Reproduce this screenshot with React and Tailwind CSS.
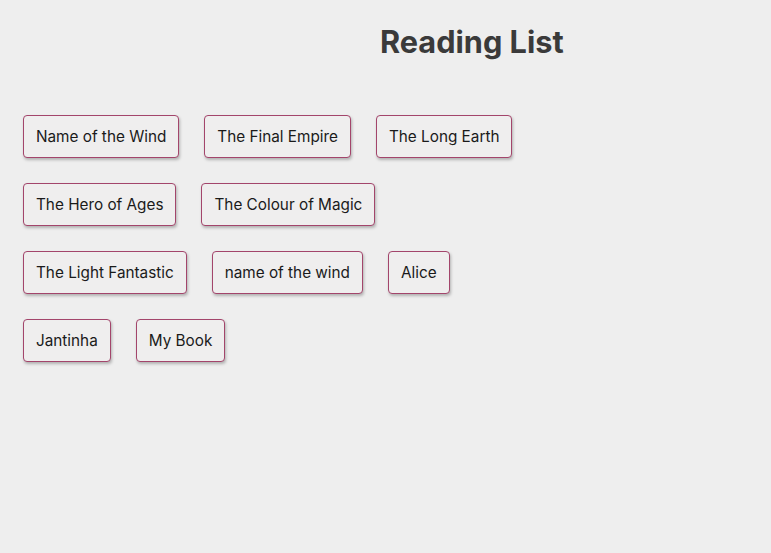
import React from 'react';

const books = [
  'Name of the Wind',
  'The Final Empire',
  'The Long Earth',
  'The Hero of Ages',
  'The Colour of Magic',
  'The Light Fantastic',
  'name of the wind',
  'Alice',
  'Jantinha',
  'My Book',
];

const App = () => {
  return (
    <div className="min-h-screen w-full bg-[#eeeeee] font-['Inter',sans-serif] text-[#1a1a1a]">
      <h1 className="pl-[380px] pt-[22px] text-[30.7px] font-bold leading-[40px] text-[#3a3a3a]">
        Reading List
      </h1>

      <div className="mt-[53px] ml-[23px] flex w-[520px] flex-wrap gap-[25px]">
        {books.map((book, i) => (
          <button
            key={i}
            className="h-[43px] rounded-[4px] border border-[#a3456b] bg-[#efeeee] px-[12px] pt-[2px] text-[15.3px] shadow-[1px_2px_3px_rgba(0,0,0,0.25)]"
          >
            {book}
          </button>
        ))}
      </div>
    </div>
  );
};

export default App;
